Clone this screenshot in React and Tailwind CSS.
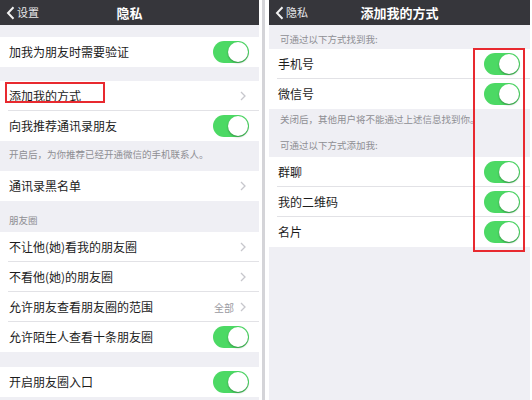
import React from 'react';

const font = { fontFamily: '"Noto Sans CJK SC", "Noto Sans", sans-serif' };

const Toggle = () => (
    <div className="relative w-[36px] h-[22px] rounded-full bg-[#4cd964] shrink-0">
        <div className="absolute right-[1px] top-[1px] w-[20px] h-[20px] rounded-full bg-white shadow-[0_1px_2px_rgba(0,0,0,0.35)]" />
    </div>
);

const Chevron = () => (
    <svg width="6" height="10" viewBox="0 0 6 10" className="shrink-0">
        <path d="M1 1l4 4-4 4" fill="none" stroke="#c7c7cc" strokeWidth="1.3" />
    </svg>
);

const NavBar = ({ back, title }) => (
    <div className="relative h-[25px] bg-[#36363b] flex items-center justify-center">
        <div className="absolute left-[6px] top-0 h-full flex items-center gap-[2px] text-[#e8e8ea] text-[11px]">
            <svg width="9" height="14" viewBox="0 0 9 14">
                <path d="M7.5 1.2L2 7l5.5 5.8" fill="none" stroke="#f2f2f2" strokeWidth="2" />
            </svg>
            <span>{back}</span>
        </div>
        <span className="text-white text-[13px] font-bold">{title}</span>
    </div>
);

const Row = ({ label, toggle, chevron, value, last, boxed }) => (
    <div className="relative h-[30px] bg-white flex items-center pl-[9px] pr-[10px]">
        <span className="flex-1 text-[12px] text-[#1c1c1c] leading-none">{label}</span>
        {value && <span className="text-[10px] text-[#9a9a9f] mr-[6px]">{value}</span>}
        {toggle && <Toggle />}
        {chevron && <div className="pr-[3px]"><Chevron /></div>}
        {!last && <div className="absolute left-[8px] right-0 bottom-0 h-px bg-[#e2e2e6]" />}
        {boxed && <div className="absolute left-[5px] top-[1px] w-[100px] h-[21px] border-2 border-[#e8292f]" />}
    </div>
);

const Note = ({ children, className }) => (
    <div className={`px-[9px] text-[9.5px] text-[#8e8e93] leading-none ${className}`}>{children}</div>
);

export default function App() {
    return (
        <div className="w-[532px] h-[400px] bg-white flex overflow-hidden" style={font}>
            {/* left: 隐私 */}
            <div className="w-[259px] h-full bg-[#efeff4] flex flex-col">
                <NavBar back="设置" title="隐私" />
                <div className="h-[12px]" />
                <Row label="加我为朋友时需要验证" toggle last />
                <div className="h-[14px]" />
                <Row label="添加我的方式" chevron boxed />
                <Row label="向我推荐通讯录朋友" toggle last />
                <Note className="h-[30px] pt-[9px]">开启后，为你推荐已经开通微信的手机联系人。</Note>
                <Row label="通讯录黑名单" chevron last />
                <Note className="h-[31px] pt-[15px]">朋友圈</Note>
                <Row label="不让他(她)看我的朋友圈" chevron />
                <Row label="不看他(她)的朋友圈" chevron />
                <Row label="允许朋友查看朋友圈的范围" value="全部" chevron />
                <Row label="允许陌生人查看十条朋友圈" toggle last />
                <div className="h-[15px]" />
                <Row label="开启朋友圈入口" toggle last />
            </div>

            {/* divider between screenshots */}
            <div className="w-[3px]" />
            <div className="w-[3px] bg-[#d4d4d8]" />
            <div className="w-[4px]" />

            {/* right: 添加我的方式 */}
            <div className="relative w-[261px] h-full bg-[#efeff4] flex flex-col">
                <NavBar back="隐私" title="添加我的方式" />
                <Note className="h-[24px] pt-[10px] pl-[11px]">可通过以下方式找到我:</Note>
                <Row label="手机号" toggle />
                <Row label="微信号" toggle last />
                <Note className="h-[27px] pt-[6px] pl-[11px]">关闭后，其他用户将不能通过上述信息找到你。</Note>
                <Note className="h-[21px] pt-[5px] pl-[11px]">可通过以下方式添加我:</Note>
                <Row label="群聊" toggle />
                <Row label="我的二维码" toggle />
                <Row label="名片" toggle last />
                <div className="absolute left-[204px] top-[48px] w-[52px] h-[204px] border-2 border-[#e8292f]" />
            </div>
            <div className="w-[2px]" />
        </div>
    );
}
